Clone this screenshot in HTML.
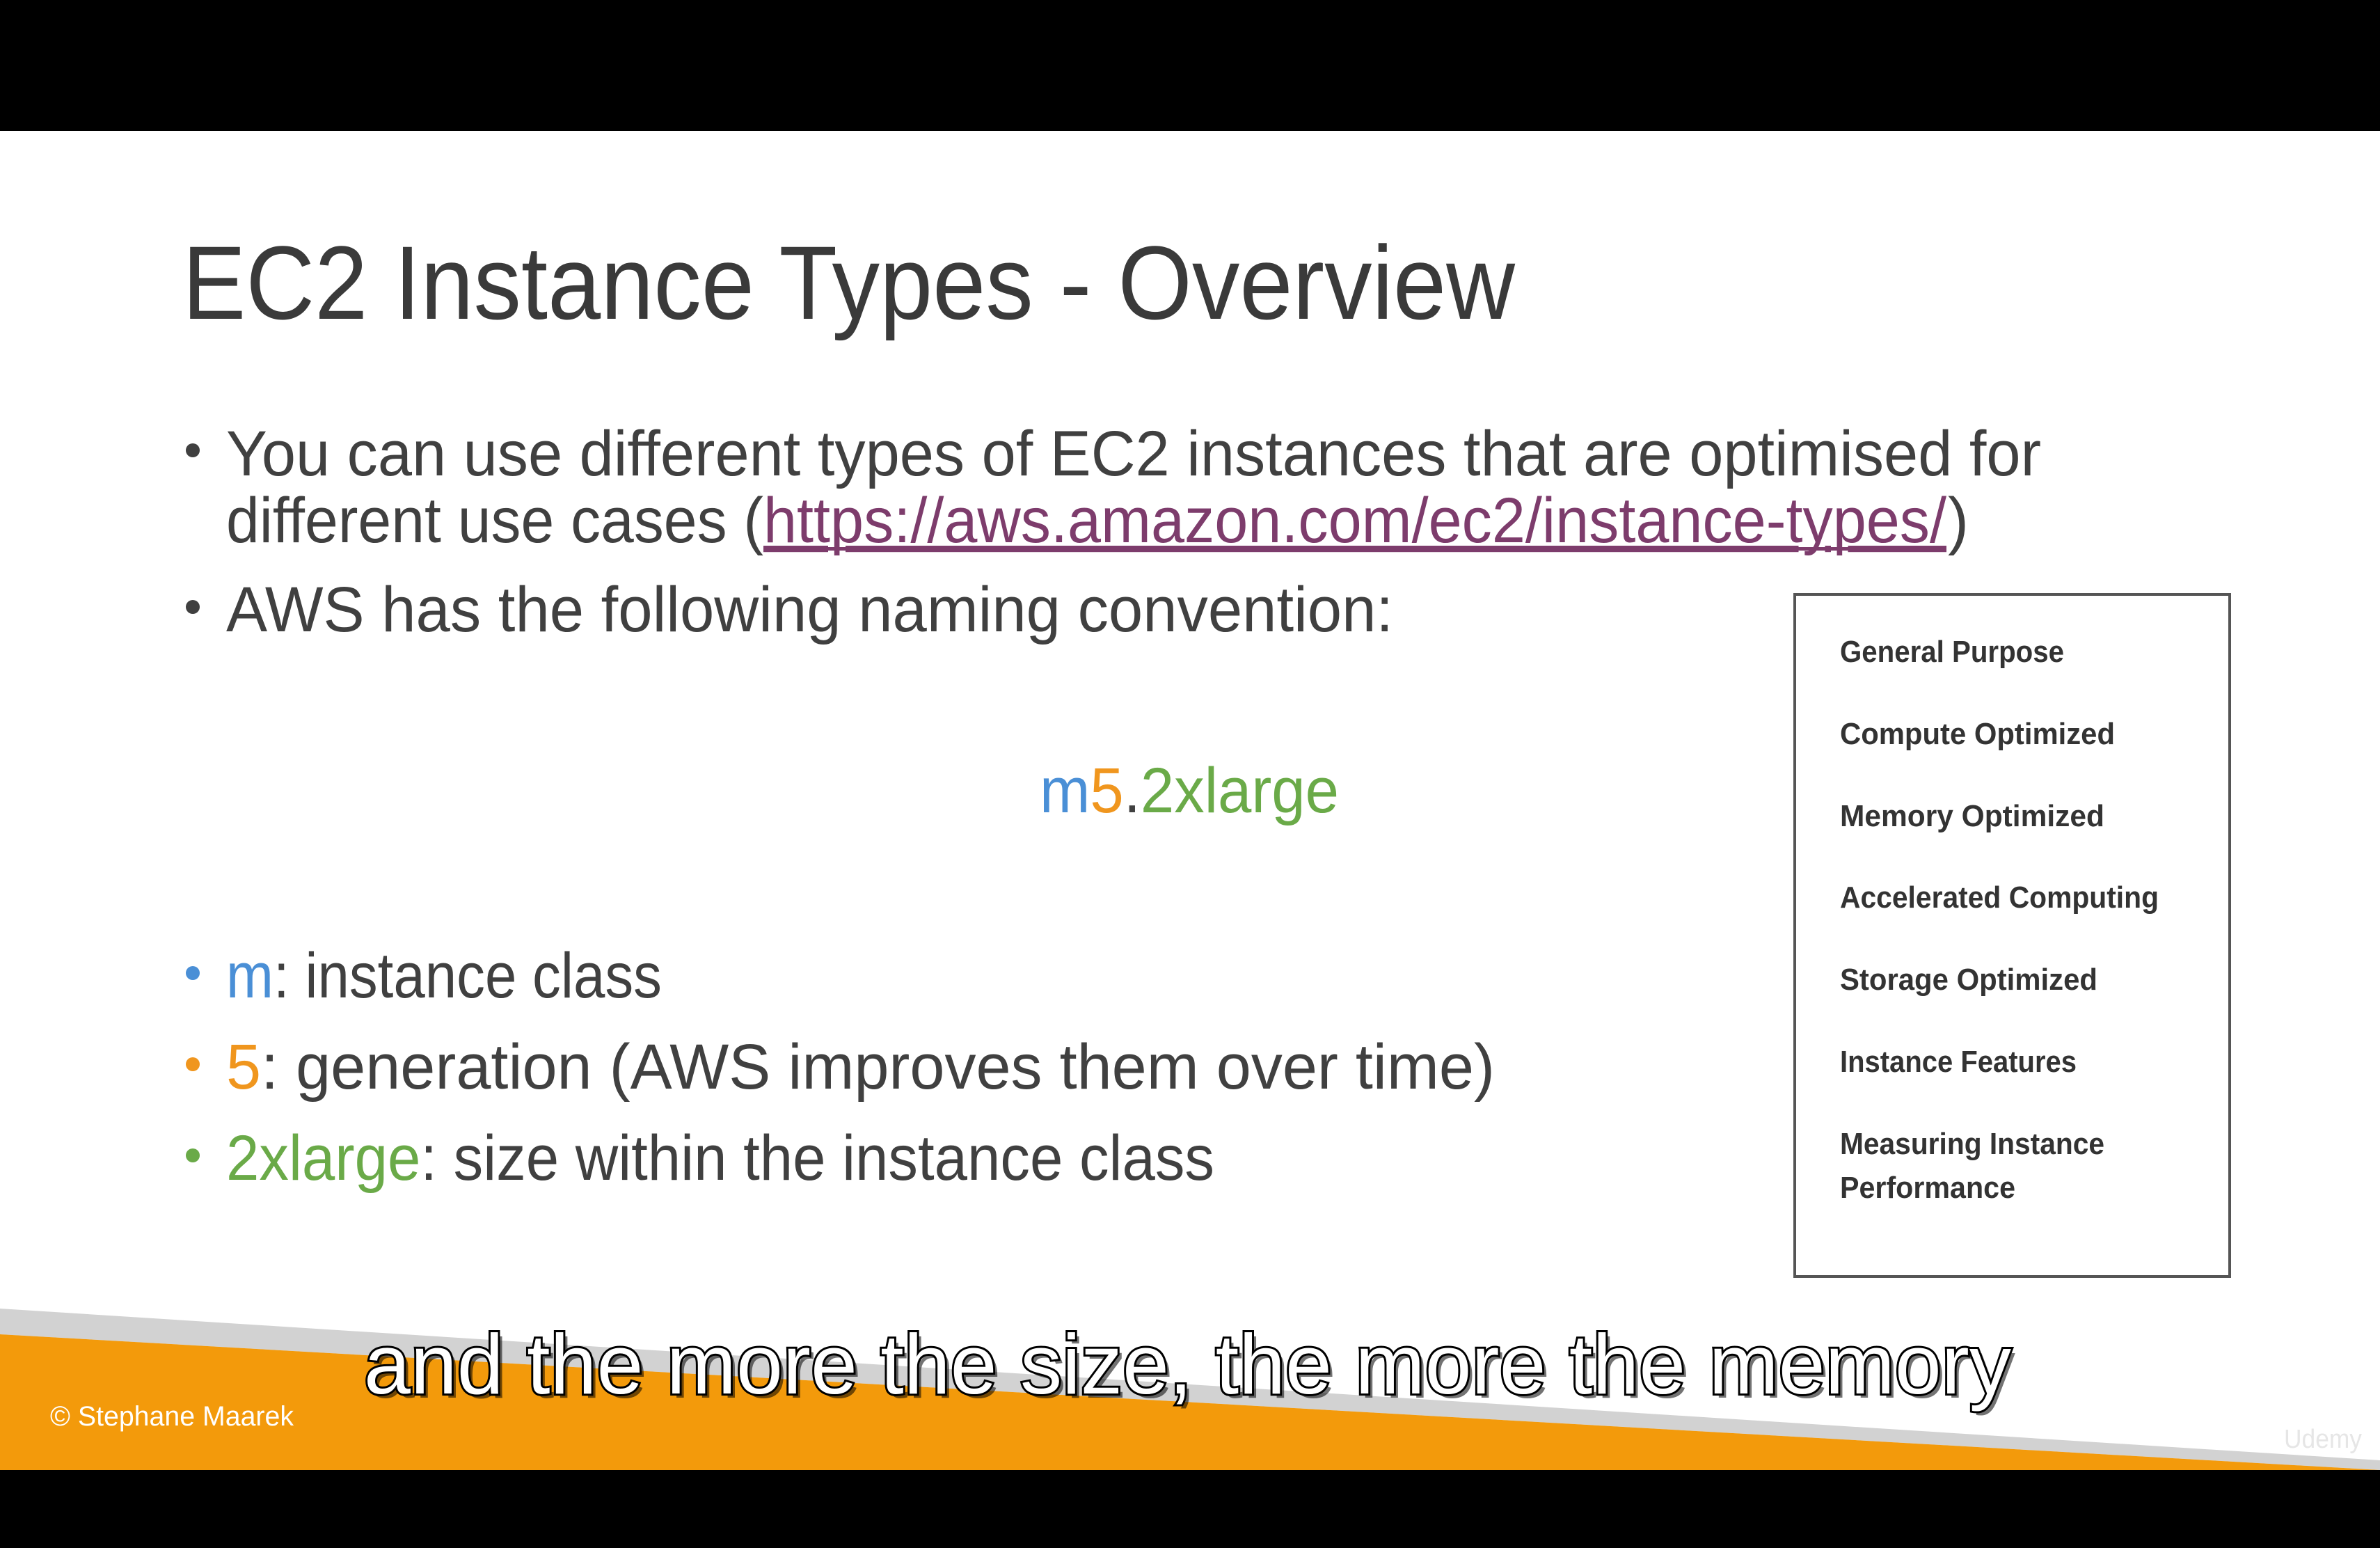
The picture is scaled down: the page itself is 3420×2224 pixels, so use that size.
<!DOCTYPE html>
<html><head><meta charset="utf-8"><style>
html,body{margin:0;padding:0;background:#000;}
svg{display:block;}
</style></head><body>
<svg width="3420" height="2224" viewBox="0 0 3420 2224" xmlns="http://www.w3.org/2000/svg" font-family="Liberation Sans, sans-serif">
<rect x="0" y="0" width="3420" height="2224" fill="#000"/>
<rect x="0" y="188" width="3420" height="1924" fill="#fff"/>
<polygon points="0,1880 3420,2098 3420,2112 0,1917" fill="#d2d2d2"/>
<polygon points="0,1917 3420,2112 0,2112" fill="#f39a0b"/>
<rect x="0" y="2112" width="3420" height="112" fill="#000"/>

<text x="262" y="458" font-size="150" fill="#3a3a3a" textLength="1915" lengthAdjust="spacingAndGlyphs">EC2 Instance Types - Overview</text>

<g fill="#404040" font-size="92">
<circle cx="277" cy="647" r="10"/>
<text x="325" y="683" textLength="2608" lengthAdjust="spacingAndGlyphs">You can use different types of EC2 instances that are optimised for</text>
<text x="325" y="779" textLength="772" lengthAdjust="spacingAndGlyphs">different use cases (</text>
<text x="1097" y="779" fill="#7d3c6c" textLength="1700" lengthAdjust="spacingAndGlyphs" text-decoration="underline">https://aws.amazon.com/ec2/instance-types/</text>
<rect x="1097" y="786" width="1700" height="5" fill="#7d3c6c"/>
<text x="2799" y="779" textLength="30" lengthAdjust="spacingAndGlyphs">)</text>
<circle cx="277" cy="872" r="10"/>
<text x="325" y="907" textLength="1677" lengthAdjust="spacingAndGlyphs">AWS has the following naming convention:</text>

<text x="1494" y="1167" textLength="430" lengthAdjust="spacingAndGlyphs"><tspan fill="#4a8fd6">m</tspan><tspan fill="#f0961e">5</tspan><tspan fill="#404040">.</tspan><tspan fill="#6aaa48">2xlarge</tspan></text>

<circle cx="277" cy="1398" r="10" fill="#4a8fd6"/>
<text x="325" y="1433" textLength="626" lengthAdjust="spacingAndGlyphs"><tspan fill="#4a8fd6">m</tspan>: instance class</text>
<circle cx="277" cy="1529" r="10" fill="#f0961e"/>
<text x="325" y="1564" textLength="1823" lengthAdjust="spacingAndGlyphs"><tspan fill="#f0961e">5</tspan>: generation (AWS improves them over time)</text>
<circle cx="277" cy="1660" r="10" fill="#6aaa48"/>
<text x="325" y="1695" textLength="1420" lengthAdjust="spacingAndGlyphs"><tspan fill="#6aaa48">2xlarge</tspan>: size within the instance class</text>
</g>

<rect x="2579" y="854" width="625" height="980" fill="none" stroke="#555" stroke-width="4"/>
<g font-size="44" font-weight="bold" fill="#333">
<text x="2644" y="951" textLength="322" lengthAdjust="spacingAndGlyphs">General Purpose</text>
<text x="2644" y="1069" textLength="395" lengthAdjust="spacingAndGlyphs">Compute Optimized</text>
<text x="2644" y="1187" textLength="380" lengthAdjust="spacingAndGlyphs">Memory Optimized</text>
<text x="2644" y="1304" textLength="458" lengthAdjust="spacingAndGlyphs">Accelerated Computing</text>
<text x="2644" y="1422" textLength="370" lengthAdjust="spacingAndGlyphs">Storage Optimized</text>
<text x="2644" y="1540" textLength="340" lengthAdjust="spacingAndGlyphs">Instance Features</text>
<text x="2644" y="1658" textLength="380" lengthAdjust="spacingAndGlyphs">Measuring Instance</text>
<text x="2644" y="1721" textLength="252" lengthAdjust="spacingAndGlyphs">Performance</text>
</g>

<text x="72" y="2048" font-size="40" fill="#fff" textLength="350" lengthAdjust="spacingAndGlyphs">© Stephane Maarek</text>
<text x="3282" y="2080" font-size="38" fill="#e6e6e6" textLength="112" lengthAdjust="spacingAndGlyphs">Udemy</text>

<text x="529" y="2008" font-size="122" fill="#000" fill-opacity="0.55" textLength="2367" lengthAdjust="spacingAndGlyphs">and the more the size, the more the memory</text>
<text x="523" y="2002" font-size="122" fill="#fff" stroke="#000" stroke-width="6" paint-order="stroke" textLength="2367" lengthAdjust="spacingAndGlyphs">and the more the size, the more the memory</text>
</svg>
</body></html>
